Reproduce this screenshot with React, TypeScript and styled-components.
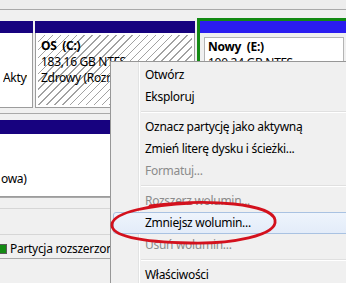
import React from "react";
import styled, { createGlobalStyle } from "styled-components";

const Global = createGlobalStyle`
  html, body { margin: 0; padding: 0; }
  body {
    width: 346px;
    height: 283px;
    overflow: hidden;
    background: #f0f0f0;
  }
`;

const FONT = `"Noto Sans", "Segoe UI", "Liberation Sans", sans-serif`;

const Screen = styled.div`
  position: relative;
  width: 346px;
  height: 283px;
  overflow: hidden;
  background: #f0f0f0;
  display: flex;
  flex-direction: column;
  font-family: ${FONT};
  font-size: 12px;
  letter-spacing: -0.3px;
  color: #000;
`;

const TopStrip = styled.div`
  flex: none;
  height: 9px;
  background: #ededed;
  border-bottom: 1px solid #a9a9a9;
`;

const DiskRow = styled.div<{ $padTop: number; $padBottom: number }>`
  flex: none;
  display: flex;
  align-items: flex-start;
  gap: 2px;
  padding: ${(p) => p.$padTop}px 0 ${(p) => p.$padBottom}px 0;
  border-bottom: 1px solid #a9a9a9;
  overflow: hidden;
`;

const Partition = styled.div<{ $width: number; $offsetTop?: number }>`
  flex: none;
  width: ${(p) => p.$width}px;
  margin-top: ${(p) => p.$offsetTop ?? 0}px;
  display: flex;
  flex-direction: column;
`;

const Header = styled.div<{ $color: string; $h: number }>`
  height: ${(p) => p.$h}px;
  background: ${(p) => p.$color};
`;

const Body = styled.div<{ $h: number; $openLeft?: boolean }>`
  height: ${(p) => p.$h}px;
  box-sizing: border-box;
  background: #fff;
  border: 1px solid #9c9c9c;
  border-top: none;
  border-left: ${(p) => (p.$openLeft ? "none" : "1px solid #9c9c9c")};
  padding: 2px;
  padding-left: ${(p) => (p.$openLeft ? 0 : 2)}px;
  display: flex;
`;

const Fill = styled.div<{ $hatched?: boolean; $padLeft?: number; $padRight?: number }>`
  flex: 1;
  min-width: 0;
  overflow: hidden;
  padding: 3px ${(p) => p.$padRight ?? 0}px 0 ${(p) => p.$padLeft ?? 3}px;
  background: ${(p) =>
    p.$hatched
      ? "repeating-linear-gradient(135deg, #ffffff 0px, #ffffff 4.5px, #a2a2a2 4.5px, #a2a2a2 5.6px)"
      : "#ffffff"};
`;

const Clip = styled.div`
  overflow: hidden;
`;

const Line = styled.div<{ $bold?: boolean }>`
  height: 16px;
  line-height: 16px;
  white-space: nowrap;
  font-weight: ${(p) => (p.$bold ? 700 : 400)};
  word-spacing: ${(p) => (p.$bold ? "3px" : "0")};
`;

const Extended = styled.div`
  flex: 1;
  min-width: 0;
  border: 3px solid #138a13;
  border-right: none;
  border-bottom: none;
  display: flex;
  flex-direction: column;
`;

const LogicalBody = styled.div`
  height: 74px;
  background: #f0f0f0;
  padding: 4px 2px 0 4px;
  box-sizing: border-box;
  display: flex;
`;

const LogicalBox = styled.div`
  flex: 1;
  background: #fff;
  border: 1px solid #b4b4b4;
  padding: 1px 0 0 3px;
  overflow: hidden;
`;

const Gap = styled.div<{ $h: number; $line?: boolean }>`
  flex: none;
  height: ${(p) => p.$h}px;
  border-bottom: ${(p) => (p.$line ? "1px solid #d6d6d6" : "none")};
`;

const Legend = styled.div`
  flex: none;
  height: 24px;
  box-sizing: border-box;
  padding-top: 4px;
  display: flex;
  align-items: center;
  gap: 3px;
  border-bottom: 1px solid #a9a9a9;
  white-space: nowrap;
`;

const Swatch = styled.span<{ $color: string }>`
  width: 7px;
  height: 10px;
  background: ${(p) => p.$color};
  border: 1px solid #5a5a5a;
  border-left: none;
  box-sizing: border-box;
`;

/* ---------- context menu (overlay) ---------- */

const Menu = styled.div`
  position: absolute;
  left: 110px;
  top: 61px;
  width: 250px;
  height: 222px;
  box-sizing: border-box;
  border: 1px solid #979797;
  border-bottom: none;
  padding: 2px 2px 0 2px;
  overflow: hidden;
  background: linear-gradient(
    to right,
    #f0f0f0 0px,
    #f0f0f0 27px,
    #e2e3e3 27px,
    #e2e3e3 28px,
    #ffffff 28px,
    #ffffff 29px,
    #f0f0f0 29px
  );
  display: flex;
  flex-direction: column;
  font-family: ${FONT};
  font-size: 12px;
  letter-spacing: -0.3px;
`;

const Item = styled.div<{ $disabled?: boolean; $hover?: boolean }>`
  flex: none;
  height: 22px;
  box-sizing: border-box;
  line-height: 20px;
  padding-left: 31px;
  border: 1px solid ${(p) => (p.$hover ? "#a9c2e2" : "transparent")};
  border-radius: 3px;
  background: ${(p) =>
    p.$hover ? "linear-gradient(to bottom, #eef4fc, #e3ecf9)" : "transparent"};
  color: ${(p) => (p.$disabled ? "#8b8b8b" : "#000")};
  white-space: nowrap;
`;

const Separator = styled.div`
  flex: none;
  height: 8px;
  display: flex;
  flex-direction: column;
  justify-content: center;
  padding-left: 28px;
  &::before {
    content: "";
    display: block;
    height: 1px;
    background: #e0e0e0;
  }
  &::after {
    content: "";
    display: block;
    height: 1px;
    background: #ffffff;
  }
`;

const Annotation = styled.svg`
  position: absolute;
  left: 0;
  top: 0;
  width: 346px;
  height: 283px;
  pointer-events: none;
`;

type MenuEntry =
  | { kind: "item"; label: string; disabled?: boolean; hover?: boolean }
  | { kind: "sep" };

const entries: MenuEntry[] = [
  { kind: "item", label: "Otwórz" },
  { kind: "item", label: "Eksploruj" },
  { kind: "sep" },
  { kind: "item", label: "Oznacz partycję jako aktywną" },
  { kind: "item", label: "Zmień literę dysku i ścieżki..." },
  { kind: "item", label: "Formatuj...", disabled: true },
  { kind: "sep" },
  { kind: "item", label: "Rozszerz wolumin...", disabled: true },
  { kind: "item", label: "Zmniejsz wolumin...", hover: true },
  { kind: "item", label: "Usuń wolumin...", disabled: true },
  { kind: "sep" },
  { kind: "item", label: "Właściwości" },
];

export default function App() {
  return (
    <>
      <Global />
      <Screen>
        <TopStrip />
        <DiskRow $padTop={8} $padBottom={5}>
          <Partition $width={33} $offsetTop={3}>
            <Header $color="#17027f" $h={12} />
            <Body $h={75} $openLeft>
              <Fill $padLeft={3} $padRight={3}>
                <Clip>
                  <Line />
                  <Line />
                  <Line>Aktywna, Partycja podstawowa)</Line>
                </Clip>
              </Fill>
            </Body>
          </Partition>
          <Partition $width={160} $offsetTop={3}>
            <Header $color="#17027f" $h={12} />
            <Body $h={75}>
              <Fill $hatched>
                <Line $bold>OS (C:)</Line>
                <Line>183,16 GB NTFS</Line>
                <Line>Zdrowy (Rozruch, Plik stronicowania)</Line>
              </Fill>
            </Body>
          </Partition>
          <Extended>
            <Header $color="#2b1cf0" $h={12} />
            <LogicalBody>
              <LogicalBox>
                <Line $bold>Nowy (E:)</Line>
                <Line>100,24 GB NTFS</Line>
                <Line>Zdrowy (Dysk logiczny)</Line>
              </LogicalBox>
            </LogicalBody>
          </Extended>
        </DiskRow>
        <DiskRow $padTop={6} $padBottom={0}>
          <Partition $width={400}>
            <Header $color="#17027f" $h={14} />
            <Body $h={63} $openLeft>
              <Fill $padLeft={1}>
                <Line />
                <Line />
                <Line>owa)</Line>
              </Fill>
            </Body>
          </Partition>
        </DiskRow>
        <Gap $h={10} $line />
        <Gap $h={25} $line />
        <Legend>
          <Swatch $color="#138a13" />
          <span>Partycja rozszerzona</span>
        </Legend>
      </Screen>

      <Menu>
        {entries.map((e, i) =>
          e.kind === "sep" ? (
            <Separator key={i} />
          ) : (
            <Item key={i} $disabled={e.disabled} $hover={e.hover}>
              {e.label}
            </Item>
          )
        )}
      </Menu>

      <Annotation viewBox="0 0 346 283">
        <path
          d="M 150 206 C 210 198, 272 204, 275 220 C 278 236, 230 244, 190 243 C 140 242, 110 236, 112 224 C 114 212, 150 205, 192 203"
          fill="none"
          stroke="#d3111d"
          strokeWidth={2.8}
          strokeLinecap="round"
        />
      </Annotation>
    </>
  );
}
